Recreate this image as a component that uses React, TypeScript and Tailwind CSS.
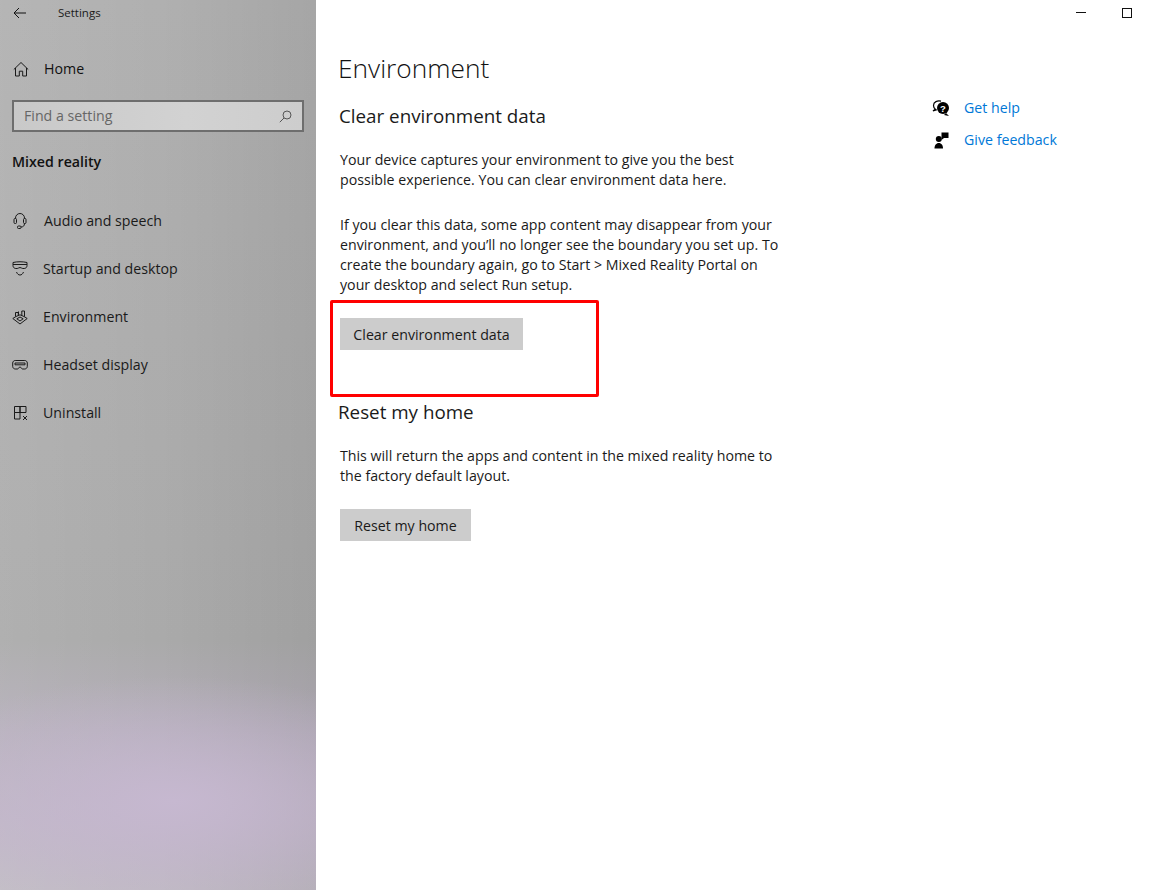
import type { ReactNode } from "react";

const stroke = { fill: "none", stroke: "#1a1a1a", strokeWidth: 1 };

const BackIcon = () => (
  <svg width="14" height="12" viewBox="0 0 14 12" fill="none" stroke="#111" strokeWidth="1">
    <path d="M13 6H1.200M6 1 1 6l5 5" />
  </svg>
);

const HomeIcon = () => (
  <svg width="16" height="16" viewBox="0 0 16 16" {...stroke}>
    <path d="M.8 8.500 8 1.500l7.200 7M2.500 7V15h3.800v-4.800h3.400V15h3.800V7" />
  </svg>
);

const SearchIcon = () => (
  <svg width="13" height="13" viewBox="0 0 13 13" fill="none" stroke="#555" strokeWidth="1">
    <circle cx="8" cy="5" r="4" />
    <path d="M5 8 .8 12.200" />
  </svg>
);

const AudioIcon = () => (
  <svg width="14" height="16" viewBox="0 0 14 16" {...stroke}>
    <path d="M2.500 5.500V5a4.500 4.500 0 0 1 9 0v.5" />
    <rect x="1" y="5.500" width="2.500" height="5" rx="1" />
    <rect x="10.500" y="5.500" width="2.500" height="5" rx="1" />
    <path d="M11.500 10.500c0 2.500-1.500 3.500-3.500 3.500" />
    <rect x="4.500" y="13" width="3.500" height="2.500" rx="1" />
  </svg>
);

const StartupIcon = () => (
  <svg width="16" height="16" viewBox="0 0 16 16" {...stroke}>
    <path d="M1 1.500c4-1 10-1 14 0v3.200c0 1.600-1.300 2.800-2.800 2.800h-1.400c-1 0-1.700-1-2.800-1s-1.800 1-2.800 1H3.800C2.300 7.500 1 6.300 1 4.700z" />
    <path d="M1 3.500h14" />
    <path d="M4.500 11c.8 2 2 3 3.500 3s2.700-1 3.500-3" />
  </svg>
);

const EnvironmentIcon = () => (
  <svg width="16" height="16" viewBox="0 0 16 16" {...stroke}>
    <path d="M.8 9.500 4 7.500l4-1.700 4 1.700 3.200 2L8 15z" />
    <path d="M4.800 9.800 8 8l3.200 1.800L8 12z" />
    <path d="M3.500 7.500V3.500h2.800v3M9.800 6.500V2h2.700v5.500M6.500 2.500v3" />
  </svg>
);

const HeadsetIcon = () => (
  <svg width="16" height="16" viewBox="0 0 16 16" {...stroke}>
    <path d="M3.200 3.500h9.600c1.300 0 2.500 1 2.500 2.500v3.500c0 1.300-1.200 2.500-2.500 2.500h-2.300c-1 0-1.300-2-2.500-2s-1.500 2-2.500 2H3.200C1.900 12 .7 10.800.7 9.500V6c0-1.500 1.200-2.500 2.500-2.500z" />
    <path d="M3 6h10v1.800H3z" />
  </svg>
);

const UninstallIcon = () => (
  <svg width="15" height="15" viewBox="0 0 15 15" {...stroke}>
    <path d="M.5.500h5.500v6H.5zM6 .500h6v6H6zM.5 6.500H6v6.500H.5z" />
    <path d="M9 10l4 4M13 10l-4 4" />
  </svg>
);

const HelpIcon = () => (
  <svg width="18" height="17" viewBox="0 0 18 17">
    <path d="M9 1.200C5.500.4 1.500 1.800 1.500 5.500c0 1.700.8 2.800 1.800 3.600L1 11l4-1.200" fill="none" stroke="#000" strokeWidth="1.200" />
    <circle cx="11" cy="8" r="6" fill="#000" />
    <path d="m14 13 3 3-5-1z" fill="#000" />
    <text x="11" y="11.500" fontSize="9.500" fontWeight="700" textAnchor="middle" fill="#fff" fontFamily="'Liberation Sans', sans-serif">?</text>
  </svg>
);

const FeedbackIcon = () => (
  <svg width="15" height="17" viewBox="0 0 15 17" fill="#000">
    <circle cx="4.800" cy="7" r="3" />
    <path d="M.5 16.500c0-3.200 1.700-5.500 4.300-5.500s4.200 2.300 4.200 5.500z" />
    <path d="M7.500.5H14.500V6H10L7.500 8z" />
  </svg>
);

const navItems: { label: string; icon: ReactNode; indent: string }[] = [
  { label: "Audio and speech", icon: <AudioIcon />, indent: "pl-[13px] gap-[17px]" },
  { label: "Startup and desktop", icon: <StartupIcon />, indent: "pl-[12px] gap-[15px]" },
  { label: "Environment", icon: <EnvironmentIcon />, indent: "pl-[12px] gap-[15px]" },
  { label: "Headset display", icon: <HeadsetIcon />, indent: "pl-[12px] gap-[15px]" },
  { label: "Uninstall", icon: <UninstallIcon />, indent: "pl-[14px] gap-[14px]" },
];

function Sidebar() {
  return (
    <aside className="w-[316px] shrink-0 flex flex-col bg-[radial-gradient(ellipse_300px_125px_at_55%_90%,#c6b8d0_0%,rgba(198,184,208,0)_100%),linear-gradient(90deg,rgba(255,255,255,0.07)_0%,rgba(255,255,255,0)_50%,rgba(0,0,0,0.06)_100%),linear-gradient(180deg,#b0b0b0_0%,#acacac_50%,#aaaaaa_72%,#b4aeb9_82%,#bcb3c2_92%,#bfbac2_100%)]">
      <div className="h-[25px] flex items-center pl-[13px] gap-[31px]">
        <BackIcon />
        <span className="text-[11.500px] text-[#1a1a1a]">Settings</span>
      </div>
      <div className="mt-[24px] h-[40px] flex items-center pl-[13px] gap-[15px] text-[14.200px] text-[#111]">
        <HomeIcon />
        <span>Home</span>
      </div>
      <div className="mt-[11px] mx-[12px] h-[32px] border-2 border-[#6e6e6e] bg-[linear-gradient(90deg,#c9c9c9,#d2d2d2_60%,#cdcdcd)] flex items-center justify-between pl-[10px] pr-[10px]">
        <span className="text-[14.200px] text-[#666]">Find a setting</span>
        <SearchIcon />
      </div>
      <h2 className="mt-[20px] pl-[12px] text-[14.200px] leading-[20px] font-semibold text-[#111]">Mixed reality</h2>
      <nav className="mt-[25px] flex flex-col">
        {navItems.map((item) => (
          <div key={item.label} className={`h-[48px] flex items-center text-[14.200px] text-[#1a1a1a] ${item.indent}`}>
            {item.icon}
            <span>{item.label}</span>
          </div>
        ))}
      </nav>
    </aside>
  );
}

function Main() {
  return (
    <main className="w-[590px] shrink-0 pl-[22px] pt-[48px] text-[#1a1a1a]">
      <h1 className="text-[26.300px] leading-[40px] font-light text-[#111]">Environment</h1>
      <h2 className="mt-[14px] ml-[1px] text-[18.800px] leading-[28px]">Clear environment data</h2>
      <div className="ml-[2px] mt-[20px] text-[14.200px] leading-[20px]">
        <p className="whitespace-nowrap">
          Your device captures your environment to give you the best
          <br />
          possible experience. You can clear environment data here.
        </p>
        <p className="mt-[25px] whitespace-nowrap">
          If you clear this data, some app content may disappear from your
          <br />
          environment, and you’ll no longer see the boundary you set up. To
          <br />
          create the boundary again, go to Start &gt; Mixed Reality Portal on
          <br />
          your desktop and select Run setup.
        </p>
      </div>
      <div className="relative ml-[2px] mt-[23px] w-fit">
        <button className="block h-[32px] w-[183px] pt-px bg-[#cccccc] text-[14.200px] text-[#1a1a1a]">Clear environment data</button>
        <div className="absolute left-[-10px] top-[-18px] w-[269px] h-[97px] border-[3px] border-[#ff0000] rounded-[2px]" />
      </div>
      <h2 className="mt-[48px] text-[18.800px] leading-[28px]">Reset my home</h2>
      <p className="ml-[2px] mt-[20px] text-[14.200px] leading-[20px] whitespace-nowrap">
        This will return the apps and content in the mixed reality home to
        <br />
        the factory default layout.
      </p>
      <button className="block ml-[2px] mt-[23px] h-[32px] w-[131px] pt-px bg-[#cccccc] text-[14.200px] text-[#1a1a1a]">Reset my home</button>
    </main>
  );
}

function RightPane() {
  return (
    <section className="flex-1 flex flex-col">
      <div className="h-[24px] flex items-center justify-end pr-[24px] gap-[36px] pt-[1px]">
        <div className="w-[10px] h-px bg-[#111]" />
        <div className="w-[10px] h-[10px] border border-[#111]" />
      </div>
      <div className="mt-[74px] pl-[26px] flex flex-col gap-[12px] text-[14.200px] leading-[20px] text-[#0078d7]">
        <div className="flex items-center gap-[14px]">
          <HelpIcon />
          <span>Get help</span>
        </div>
        <div className="flex items-center gap-[15px] pl-[2px]">
          <FeedbackIcon />
          <span>Give feedback</span>
        </div>
      </div>
    </section>
  );
}

export default function App() {
  return (
    <div className="w-[1156px] h-[890px] flex overflow-hidden bg-white font-['Open_Sans','Noto_Sans',sans-serif]">
      <Sidebar />
      <Main />
      <RightPane />
    </div>
  );
}
